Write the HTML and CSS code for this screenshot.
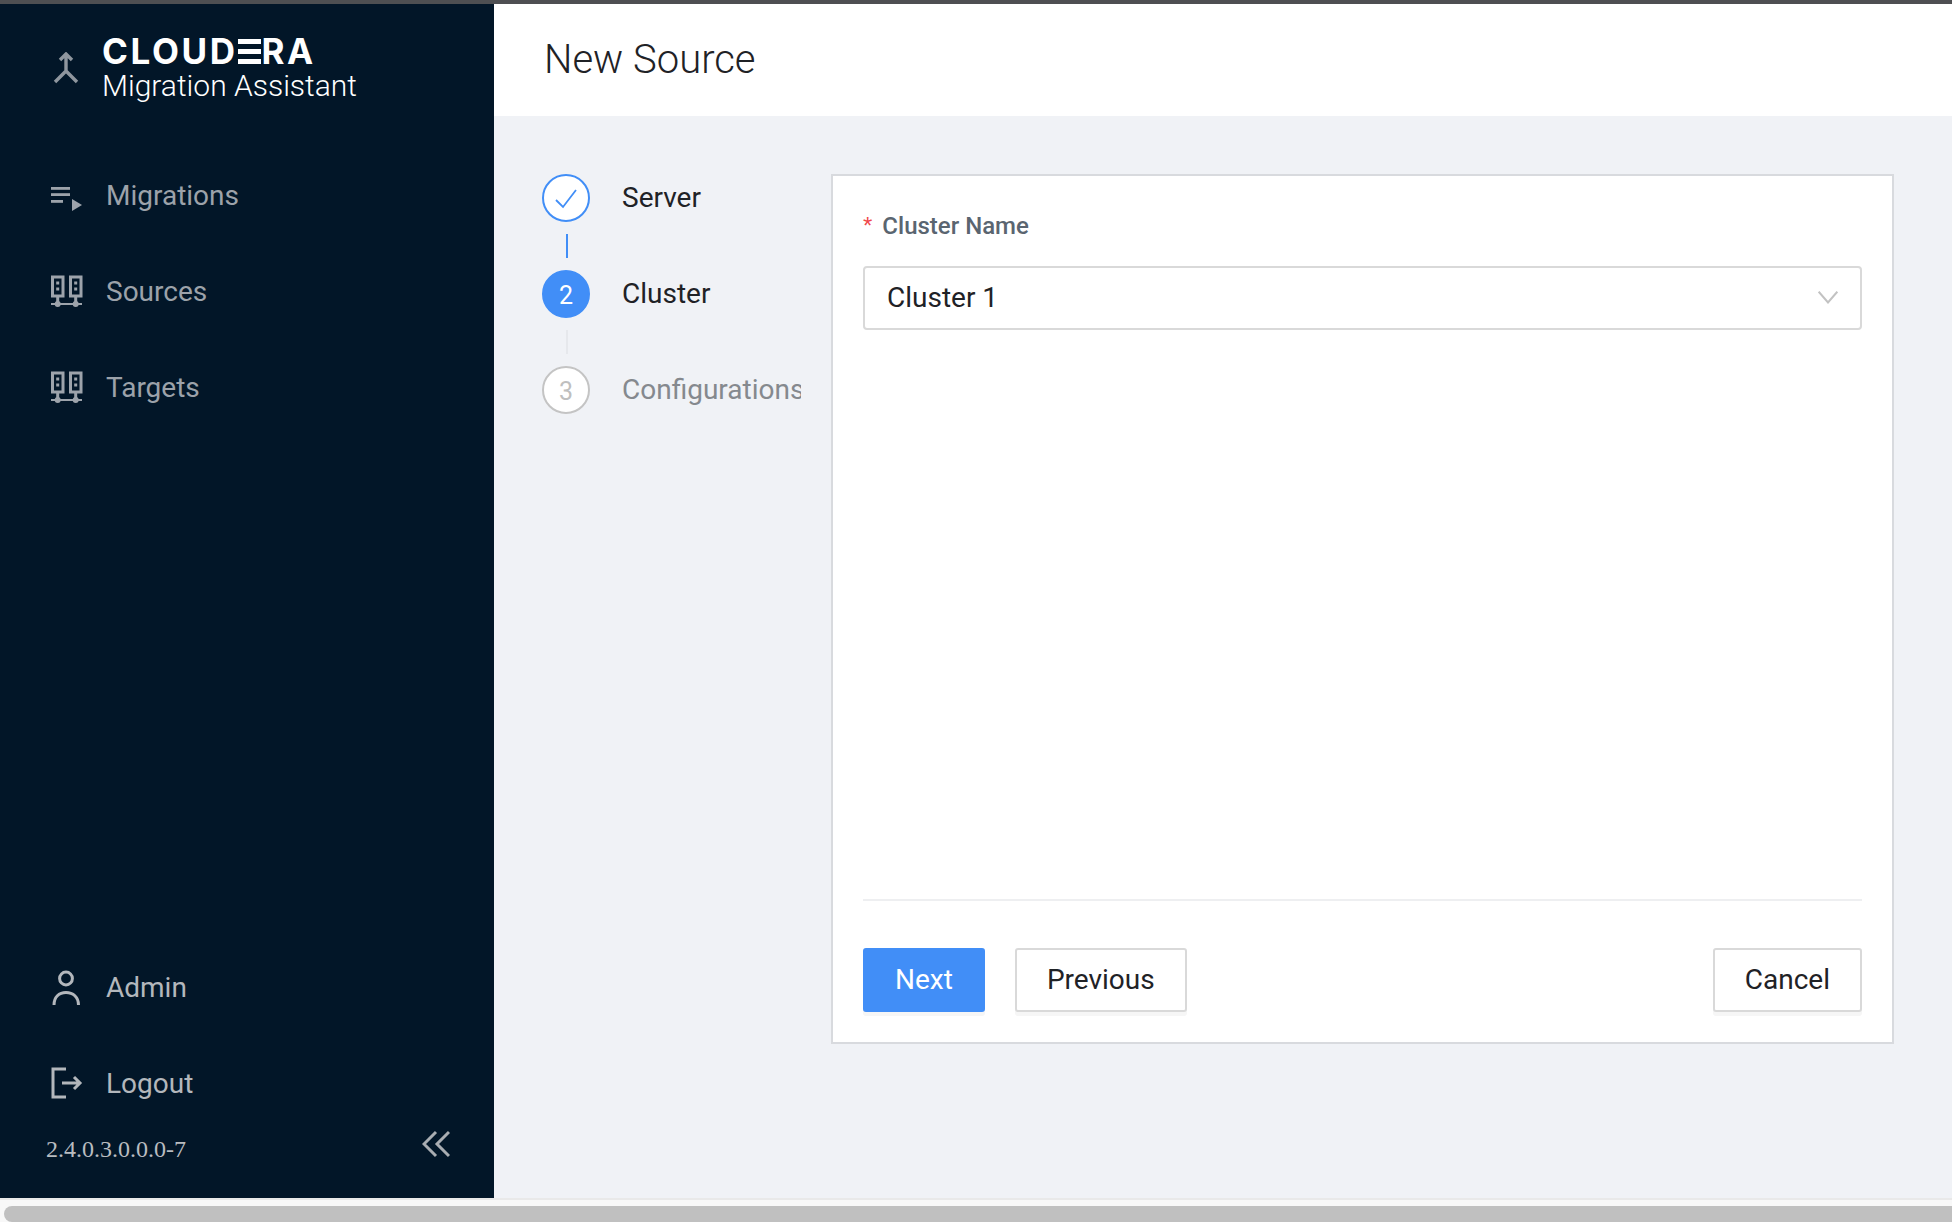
FILE: index.html
```html
<!DOCTYPE html>
<html lang="en">
<head>
  <meta charset="UTF-8" />
  <title>New Source</title>
  <link rel="stylesheet" href="styles.css">
</head>
<body>
  <div class="top-edge"></div>
  <div class="app">
    <aside class="sidebar">
      <div class="brand">
        <svg class="brand-icon" viewBox="0 0 32 32" fill="none" stroke="#8f969e" stroke-width="3.4">
          <path d="M10 8 L16 2 L22 8 M16 3 V20 M5 30 L16 19 L27 30" />
        </svg>
        <div class="brand-text">
          <div class="brand-name">CLOUD<span class="brand-e">E</span>RA</div>
          <div class="brand-sub">Migration Assistant</div>
        </div>
      </div>
      <nav class="nav">
        <a class="nav-item">
          <svg class="nav-icon" viewBox="0 0 32 32" fill="#9da3ab">
            <rect x="0" y="8" width="19" height="2.8" />
            <rect x="0" y="14.2" width="19" height="2.8" />
            <rect x="0" y="21" width="12" height="2.8" />
            <path d="M21 20 L31 26 L21 32 Z" />
          </svg>
          <span>Migrations</span>
        </a>
        <a class="nav-item">
          <svg class="nav-icon" viewBox="0 0 32 32" fill="none" stroke="#9da3ab" stroke-width="3">
            <rect x="1.5" y="2" width="10.5" height="19" />
            <rect x="19.5" y="2" width="10.5" height="19" />
            <path d="M6.7 21 V29 M24.7 21 V29" />
            <path d="M0 29 H31" stroke-width="2" />
            <circle cx="6.7" cy="29" r="3" fill="#9da3ab" stroke="none" />
            <circle cx="24.7" cy="29" r="3" fill="#9da3ab" stroke="none" />
            <path d="M6.7 6.5 V9.5 M6.7 12.5 V15.5 M24.7 6.5 V9.5 M24.7 12.5 V15.5" />
          </svg>
          <span>Sources</span>
        </a>
        <a class="nav-item">
          <svg class="nav-icon" viewBox="0 0 32 32" fill="none" stroke="#9da3ab" stroke-width="3">
            <rect x="1.5" y="2" width="10.5" height="19" />
            <rect x="19.5" y="2" width="10.5" height="19" />
            <path d="M6.7 21 V29 M24.7 21 V29" />
            <path d="M0 29 H31" stroke-width="2" />
            <circle cx="6.7" cy="29" r="3" fill="#9da3ab" stroke="none" />
            <circle cx="24.7" cy="29" r="3" fill="#9da3ab" stroke="none" />
            <path d="M6.7 6.5 V9.5 M6.7 12.5 V15.5 M24.7 6.5 V9.5 M24.7 12.5 V15.5" />
          </svg>
          <span>Targets</span>
        </a>
      </nav>
      <nav class="nav nav-bottom">
        <a class="nav-item">
          <svg class="nav-icon" viewBox="0 0 32 32" fill="none" stroke="#b3b7bc" stroke-width="3">
            <circle cx="15" cy="7.5" r="6.4" />
            <path d="M3 34 C3 26 8 21.5 15 21.5 C22 21.5 27.5 26 27.5 34" />
          </svg>
          <span>Admin</span>
        </a>
        <a class="nav-item">
          <svg class="nav-icon" viewBox="0 0 32 32" fill="none" stroke="#b3b7bc" stroke-width="3">
            <path d="M15 2 H2 V30 H15" />
            <path d="M11 16 H29 M23 10 L29 16 L23 22" />
          </svg>
          <span>Logout</span>
        </a>
      </nav>
      <div class="sidebar-foot">
        <span class="version">2.4.0.3.0.0.0-7</span>
        <svg class="collapse" viewBox="0 0 28 28" fill="none" stroke="#a9adb2" stroke-width="3">
          <path d="M14 2 L2 14 L14 26 M27 2 L15 14 L27 26" />
        </svg>
      </div>
    </aside>
    <main class="content">
      <header class="page-header">
        <h1>New Source</h1>
      </header>
      <div class="wizard">
        <ul class="steps">
          <li class="step done">
            <span class="step-dot">
              <svg viewBox="0 0 24 24" width="24" height="24" fill="none" stroke="#418ef7" stroke-width="1.8">
                <path d="M2 13 L9 20 L22 3" />
              </svg>
            </span>
            <span class="step-label">Server</span>
          </li>
          <li class="step-line active"></li>
          <li class="step current">
            <span class="step-dot">2</span>
            <span class="step-label">Cluster</span>
          </li>
          <li class="step-line"></li>
          <li class="step todo">
            <span class="step-dot">3</span>
            <span class="step-label">Configurations</span>
          </li>
        </ul>
        <section class="card">
          <div class="field">
            <label class="field-label"><span class="required">*</span>Cluster Name</label>
            <div class="select">
              <span>Cluster 1</span>
              <svg viewBox="0 0 20 13" width="20" height="13" fill="none" stroke="#c2c2c2" stroke-width="2">
                <path d="M0.7 0.7 L10 11.5 L19.3 0.7" />
              </svg>
            </div>
          </div>
          <div class="card-foot">
            <button class="btn btn-primary">Next</button>
            <button class="btn">Previous</button>
            <button class="btn btn-right">Cancel</button>
          </div>
        </section>
      </div>
    </main>
  </div>
  <div class="scroll-track">
    <div class="scroll-thumb"></div>
  </div>
</body>
</html>
```

FILE: styles.css
```css
html, body {
  margin: 0;
  padding: 0;
  height: 100%;
  overflow: hidden;
}
body {
  display: flex;
  flex-direction: column;
  font-family: Roboto, "Liberation Sans", sans-serif;
  background: #f0f2f6;
  color: #1f2226;
}
.top-edge {
  height: 4px;
  background: #4e4f52;
}
.app {
  flex: 1;
  display: flex;
  min-height: 0;
}

/* sidebar */
.sidebar {
  width: 494px;
  display: flex;
  flex-direction: column;
  background: #021628;
}
.brand {
  height: 143px;
  box-sizing: border-box;
  padding: 30px 0 0 50px;
  display: flex;
  gap: 20px;
}
.brand-icon {
  width: 32px;
  height: 32px;
  margin-top: 18px;
}
.brand-name {
  font-family: Inter, "Liberation Sans", sans-serif;
  font-weight: 700;
  font-size: 35px;
  line-height: 35px;
  letter-spacing: 2.6px;
  color: #ffffff;
}
.brand-e {
  display: inline-block;
  color: transparent;
  line-height: 25px;
  background: repeating-linear-gradient(to bottom, #ffffff 0 5px, transparent 5px 10px);
  background-size: 100% 25px;
  background-repeat: no-repeat;
  background-position: 0 0;
}
.brand-sub {
  font-size: 30px;
  line-height: 34px;
  font-weight: 300;
  color: #ffffff;
}
.nav-item {
  height: 96px;
  box-sizing: border-box;
  padding-left: 51px;
  display: flex;
  align-items: center;
  gap: 23px;
  font-size: 28px;
  color: #9ca2aa;
}
.nav-bottom {
  margin-top: auto;
}
.nav-bottom .nav-item {
  color: #b3b7bc;
}
.nav-icon {
  width: 32px;
  height: 32px;
  overflow: visible;
}
.sidebar-foot {
  height: 67px;
  box-sizing: border-box;
  padding: 0 44px 0 46px;
  display: flex;
  justify-content: space-between;
}
.version {
  margin-top: 3px;
  font-family: "Liberation Serif", serif;
  font-size: 24px;
  line-height: 30px;
  color: #b9bcc0;
}
.collapse {
  width: 28px;
  height: 28px;
  margin-top: -1px;
}

/* main */
.content {
  flex: 1;
  display: flex;
  flex-direction: column;
  min-width: 0;
}
.page-header {
  height: 112px;
  box-sizing: border-box;
  padding: 0 0 2px 50px;
  display: flex;
  align-items: center;
  background: #ffffff;
}
.page-header h1 {
  margin: 0;
  font-size: 40px;
  font-weight: 300;
  color: #1f2226;
}
.wizard {
  display: flex;
  padding: 58px 58px 0 48px;
}
.steps {
  width: 289px;
  flex: none;
  margin: 0;
  padding: 0;
  list-style: none;
}
.step {
  display: flex;
  align-items: center;
  gap: 32px;
  height: 48px;
}
.step-dot {
  width: 48px;
  height: 48px;
  box-sizing: border-box;
  flex: none;
  padding-top: 2px;
  border-radius: 50%;
  display: flex;
  align-items: center;
  justify-content: center;
  font-size: 25px;
  background: #ffffff;
  border: 2px solid #418ef7;
}
.step-label {
  width: 179px;
  overflow: hidden;
  white-space: nowrap;
  font-size: 28px;
  line-height: 40px;
}
.current .step-dot {
  background: #418ef7;
  color: #ffffff;
}
.todo .step-dot {
  border-color: #c4c4c4;
  color: #bfbfbf;
}
.todo .step-label {
  color: #85898e;
}
.step-line {
  width: 2px;
  height: 24px;
  margin: 12px 0 12px 24px;
  background: #e6e8ec;
}
.step-line.active {
  background: #418ef7;
}

/* form card */
.card {
  flex: 1;
  height: 870px;
  box-sizing: border-box;
  display: flex;
  flex-direction: column;
  padding: 0 30px;
  background: #ffffff;
  border: 2px solid #d8dade;
}
.field {
  flex: 1;
  padding-top: 34px;
}
.field-label {
  display: block;
  margin-bottom: 24px;
  font-size: 24px;
  line-height: 32px;
  font-weight: 500;
  color: #5a6570;
}
.required {
  margin-right: 10px;
  font-family: "Liberation Sans", sans-serif;
  font-size: 24px;
  color: #f0484b;
}
.select {
  height: 64px;
  box-sizing: border-box;
  padding: 0 22px 2px;
  display: flex;
  align-items: center;
  justify-content: space-between;
  border: 2px solid #d9d9d9;
  border-radius: 4px;
  font-size: 28px;
}
.card-foot {
  display: flex;
  gap: 30px;
  height: 143px;
  box-sizing: border-box;
  padding-top: 47px;
  border-top: 2px solid #eeeff1;
}
.btn {
  height: 64px;
  padding: 0 30px 2px;
  border: 2px solid #d9d9d9;
  border-radius: 3px;
  background: #ffffff;
  font-family: Roboto, "Liberation Sans", sans-serif;
  font-size: 28px;
  color: #1f2226;
  box-shadow: 0 4px 0 #f6f6f6;
}
.btn-primary {
  border-color: #418ef7;
  background: #418ef7;
  color: #ffffff;
}
.btn-right {
  margin-left: auto;
}

/* browser scrollbar at the bottom */
.scroll-track {
  height: 24px;
  box-sizing: border-box;
  padding: 6px 0 0 4px;
  background: #f8f8f8;
  border-top: 2px solid #e9e9e9;
}
.scroll-thumb {
  height: 16px;
  background: #c0c0c0;
  border-radius: 8px 0 0 8px;
}
```
